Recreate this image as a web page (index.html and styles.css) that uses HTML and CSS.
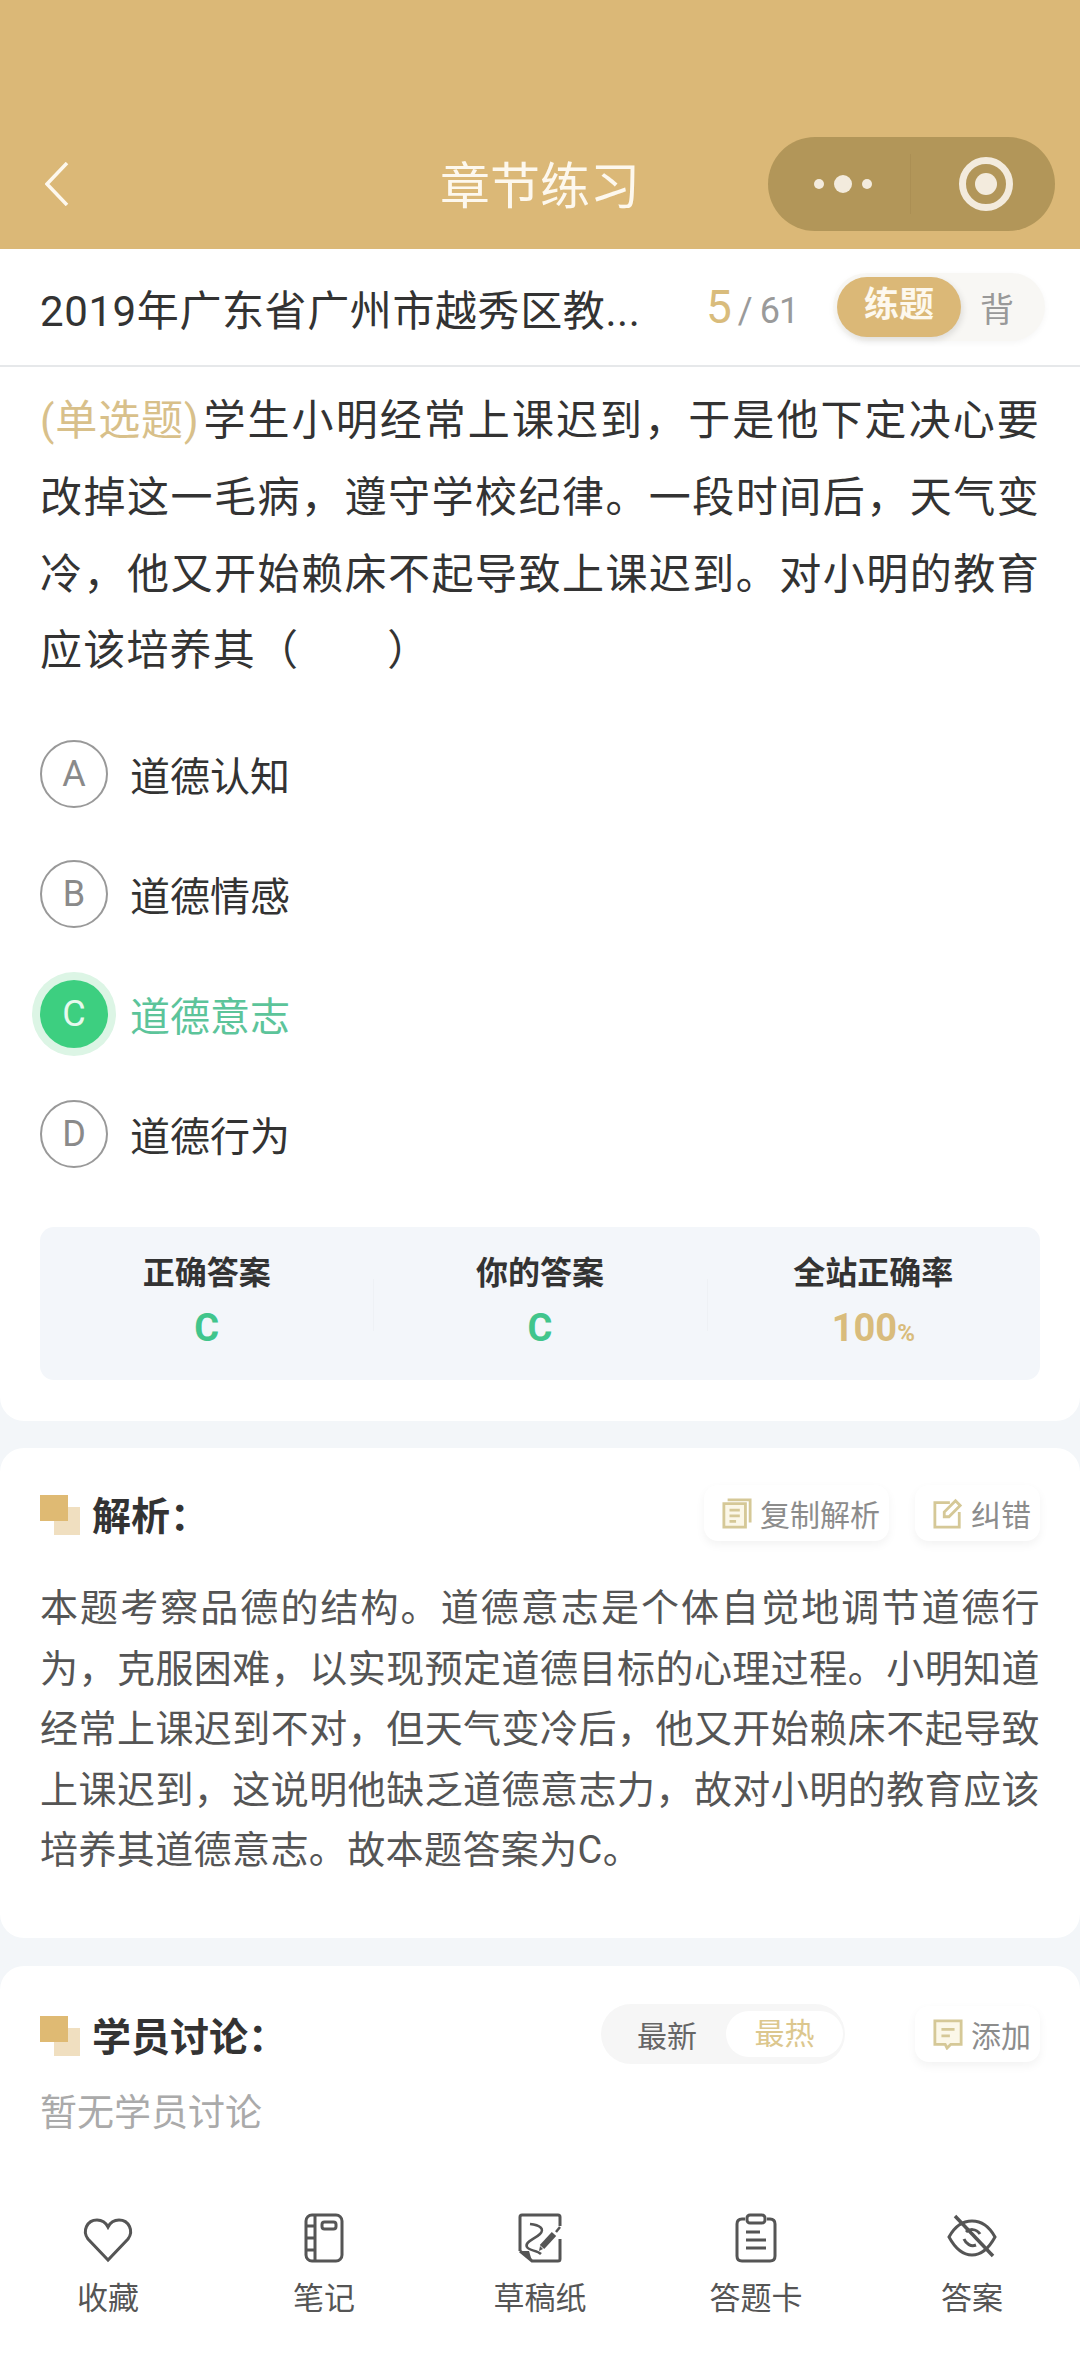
FILE: index.html
```html
<!DOCTYPE html>
<html lang="zh-CN">
<head>
  <meta charset="UTF-8">
  <title>章节练习</title>
  <meta name="viewport" content="width=device-width, initial-scale=1.0">
  <link rel="stylesheet" href="styles.css">
</head>
<body>
  <div class="page">
    <header class="nav">
      <svg class="nav-back" viewBox="0 0 24 44"><path d="M22 1 L2 22 L22 43" /></svg>
      <div class="nav-title">章节练习</div>
      <div class="capsule">
        <div class="capsule-more"><i></i><i class="big"></i><i></i></div>
        <div class="capsule-sep"></div>
        <div class="capsule-target"><i></i></div>
      </div>
    </header>

    <div class="subbar">
      <div class="subbar-title">2019年广东省广州市越秀区教...</div>
      <div class="count"><b>5</b><span>/ 61</span></div>
      <div class="mode">
        <span class="mode-on">练题</span>
        <span class="mode-off">背</span>
      </div>
    </div>

    <section class="card card-question">
      <p class="question"><span class="qtype">(单选题)</span>学生小明经常上课迟到，于是他下定决心要改掉这一毛病，遵守学校纪律。一段时间后，天气变冷，他又开始赖床不起导致上课迟到。对小明的教育应该培养其（&emsp;&emsp;）</p>
      <div class="options">
        <div class="option"><span class="letter">A</span>道德认知</div>
        <div class="option"><span class="letter">B</span>道德情感</div>
        <div class="option option-right"><span class="letter">C</span>道德意志</div>
        <div class="option"><span class="letter">D</span>道德行为</div>
      </div>
      <div class="stats">
        <div class="stat"><div class="stat-label">正确答案</div><div class="stat-value green">C</div></div>
        <div class="stat"><div class="stat-label">你的答案</div><div class="stat-value green">C</div></div>
        <div class="stat"><div class="stat-label">全站正确率</div><div class="stat-value gold">100<small>%</small></div></div>
      </div>
    </section>

    <section class="card card-analysis">
      <div class="card-head">
        <div class="mark"></div>
        <h2>解析：</h2>
        <div class="head-actions">
          <div class="chip">
            <svg viewBox="0 0 32 32"><path class="ic-fill" d="M2 6 H25 V31 H2 Z"/><path d="M2 6 H25 V31 H2 Z M8 13 H19 M8 19 H19 M8 25 H15 M6 2 H30 V26"/></svg>
            复制解析
          </div>
          <div class="chip">
            <svg viewBox="0 0 32 32"><path d="M18 5 H2 V31 H28 V15 M12 20 L12 15 L24 3 L29 8 L17 20 Z"/></svg>
            纠错
          </div>
        </div>
      </div>
      <p class="analysis">本题考察品德的结构。道德意志是个体自觉地调节道德行为，克服困难，以实现预定道德目标的心理过程。小明知道经常上课迟到不对，但天气变冷后，他又开始赖床不起导致上课迟到，这说明他缺乏道德意志力，故对小明的教育应该培养其道德意志。故本题答案为C。</p>
    </section>

    <section class="card card-discuss">
      <div class="card-head">
        <div class="mark"></div>
        <h2>学员讨论：</h2>
        <div class="head-actions">
          <div class="tabs">
            <span class="tab">最新</span>
            <span class="tab tab-on">最热</span>
          </div>
          <div class="chip chip-add">
            <svg viewBox="0 0 32 32"><path class="ic-fill" d="M2 2 H30 V27 H19 L15 31 L13 27 H2 Z"/><path d="M2 2 H30 V27 H19 L15 31 L13 27 H2 Z M9 11 H23 M9 18 H18"/></svg>
            添加
          </div>
        </div>
      </div>
      <div class="empty">暂无学员讨论</div>

      <nav class="tools">
        <div class="tool">
          <svg viewBox="0 0 50 50"><path d="M25 47 L5 26 C-1 18 4 7 14 7 C19 7 23 10 25 14 C27 10 31 7 36 7 C46 7 51 18 45 26 Z"/></svg>
          <span>收藏</span>
        </div>
        <div class="tool">
          <svg viewBox="0 0 50 50"><rect x="7" y="2" width="36" height="46" rx="6"/><path d="M16 2 V48 M7 13 H16 M7 25 H16 M7 37 H16"/><rect x="23" y="9" width="14" height="7" rx="2.5"/></svg>
          <span>笔记</span>
        </div>
        <div class="tool">
          <svg viewBox="0 0 50 50"><path d="M5 38 V4 Q5 2 7 2 H43 Q45 2 45 4 V13 M45 26 V46 Q45 48 43 48 H17 L5 38"/><path class="solid" d="M5 38 H14 L17 48 Z"/><path class="thin" d="M15 11 C25 12 30 16 25 21 C20 26 9 29 12 34 C14 38 22 37 26 41"/><path class="pencil" d="M27 34 L39 21"/><path class="solid" d="M24 38 L25 33 L28 36 Z"/><path class="thin" d="M41 19 L45 14"/></svg>
          <span>草稿纸</span>
        </div>
        <div class="tool">
          <svg viewBox="0 0 50 50"><path d="M14 6 H11 Q6 6 6 11 V43 Q6 48 11 48 H39 Q44 48 44 43 V11 Q44 6 39 6 H36"/><rect x="16" y="2" width="18" height="8" rx="3"/><path d="M15 19 H29 M15 27 H35 M15 35 H35"/></svg>
          <span>答题卡</span>
        </div>
        <div class="tool">
          <svg viewBox="0 0 50 50"><path d="M2 24 C8 13 16 8 25 8 C34 8 42 13 48 24 C42 35 34 42 25 42 C16 42 8 35 2 24 Z M19 19 C22 16 29 15 33 21 M17 26 C19 31 24 34 29 32"/><path class="strike" d="M8 3 L46 43"/></svg>
          <span>答案</span>
        </div>
      </nav>
    </section>
  </div>
</body>
</html>
```

FILE: styles.css
```css
* {
  box-sizing: border-box;
}
html, body {
  margin: 0;
  padding: 0;
}
body {
  font-family: Roboto, "Noto Sans CJK SC", sans-serif;
  color: #333;
  background: #f3f6f9;
}
.page {
  width: 1080px;
  height: 2376px;
  display: flex;
  flex-direction: column;
  overflow: hidden;
}
h2, p {
  margin: 0;
}

/* top bar */
.nav {
  height: 249px;
  flex: none;
  background: #dbb877;
  display: flex;
  align-items: center;
  position: relative;
  padding: 137px 25px 18px 45px;
}
.nav-back {
  width: 24px;
  height: 44px;
  fill: none;
  stroke: #fdf8ee;
  stroke-width: 3.5;
}
.nav-title {
  position: absolute;
  left: 0;
  right: 0;
  top: 159px;
  text-align: center;
  font-size: 50px;
  line-height: 56px;
  color: #fdf8ee;
}
.capsule {
  margin-left: auto;
  width: 287px;
  height: 94px;
  border-radius: 47px;
  background: #b29659;
  display: flex;
  align-items: center;
}
.capsule-more {
  width: 142px;
  display: flex;
  align-items: center;
  justify-content: center;
  gap: 10px;
  padding-left: 8px;
}
.capsule-more i {
  width: 10px;
  height: 10px;
  border-radius: 50%;
  background: #f3ebdd;
}
.capsule-more i.big {
  width: 18px;
  height: 18px;
}
.capsule-sep {
  width: 1px;
  height: 60px;
  background: #ab8f54;
}
.capsule-target {
  width: 54px;
  height: 54px;
  margin-left: 48px;
  border: 7px solid #f3ebdd;
  border-radius: 50%;
  display: flex;
  align-items: center;
  justify-content: center;
}
.capsule-target i {
  width: 22px;
  height: 22px;
  border-radius: 50%;
  background: #f3ebdd;
}

/* title row */
.subbar {
  height: 118px;
  flex: none;
  background: #fff;
  border-bottom: 2px solid #e6e8ea;
  display: flex;
  align-items: center;
  padding: 0 33px 0 40px;
}
.subbar-title {
  font-size: 42px;
  letter-spacing: 0.6px;
  color: #333;
  width: 666px;
  white-space: nowrap;
}
.count {
  font-size: 36px;
  color: #9a9a9a;
  display: flex;
  align-items: baseline;
  gap: 6px;
  width: 127px;
}
.count b {
  font-weight: 400;
  font-size: 46px;
  color: #d9bc7c;
}
.count span {
  letter-spacing: -1px;
}
.mode {
  width: 212px;
  height: 68px;
  border-radius: 34px;
  background: #f8f7f4;
  display: flex;
  align-items: center;
  padding-left: 4px;
  box-shadow: 0 2px 6px rgba(0, 0, 0, 0.04);
}
.mode-on {
  width: 124px;
  height: 60px;
  line-height: 58px;
  border-radius: 30px;
  background: #dbb877;
  color: #fdf8ee;
  font-size: 35px;
  font-weight: 700;
  text-align: center;
  box-shadow: 2px 3px 6px rgba(0, 0, 0, 0.1);
}
.mode-off {
  margin-left: 19px;
  font-size: 34px;
  color: #999;
}

/* cards */
.card {
  background: #fff;
  padding: 0 40px;
  flex: none;
}
.card-question {
  height: 1054px;
  padding-top: 16px;
  border-radius: 0 0 24px 24px;
}
.question {
  font-size: 42px;
  letter-spacing: 1.2px;
  line-height: 76.8px;
  text-align: justify;
  color: #333;
}
.qtype {
  color: #d8c08a;
  letter-spacing: 0;
  margin-right: 4px;
}
.options {
  margin-top: 50px;
  display: flex;
  flex-direction: column;
  gap: 52px;
}
.option {
  height: 68px;
  display: flex;
  align-items: center;
  gap: 22px;
  font-size: 40px;
  color: #333;
}
.letter {
  width: 68px;
  height: 68px;
  border: 2.5px solid #999;
  border-radius: 50%;
  display: flex;
  align-items: center;
  justify-content: center;
  font-size: 36px;
  color: #8a8a8a;
}
.option-right {
  color: #5cc49a;
}
.option-right .letter {
  border: none;
  background: #3dcf80;
  color: #e6f9ee;
  box-shadow: 0 0 0 8px #dcf5e5;
}
.stats {
  margin-top: 59px;
  height: 153px;
  border-radius: 14px;
  background: #f3f6fa;
  display: flex;
}
.stat {
  flex: 1;
  text-align: center;
  padding-top: 26px;
  position: relative;
}
.stat + .stat::before {
  content: "";
  position: absolute;
  left: 0;
  top: 52px;
  height: 52px;
  width: 1px;
  background: #eef1f5;
}
.stat-label {
  font-size: 32px;
  font-weight: 700;
  line-height: 40px;
  color: #333;
}
.stat-value {
  font-size: 38px;
  font-weight: 700;
  line-height: 46px;
  margin-top: 12px;
}
.stat-value small {
  font-size: 24px;
}
.green {
  color: #41c58c;
}
.gold {
  color: #d9bc7c;
}
.card-analysis {
  margin-top: 27px;
  height: 490px;
  border-radius: 24px;
  padding-top: 37px;
}
.card-discuss {
  margin-top: 28px;
  flex: 1;
  border-radius: 24px 24px 0 0;
  padding-top: 40px;
  display: flex;
  flex-direction: column;
}
.card-head {
  display: flex;
  align-items: center;
  height: 60px;
}
.mark {
  width: 40px;
  height: 40px;
  flex: none;
  background:
    linear-gradient(#dfba73, #dfba73) 0 0 / 28px 26px no-repeat,
    linear-gradient(#f0dfc0, #f0dfc0) 14px 12px / 26px 28px no-repeat;
}
.card-head h2 {
  margin: 4px 0 0 12px;
  font-size: 39px;
  line-height: 60px;
  font-weight: 700;
  color: #333;
}
.head-actions {
  margin-left: auto;
  margin-bottom: 5px;
  display: flex;
  align-items: center;
}
.chip {
  display: flex;
  align-items: center;
  gap: 8px;
  height: 56px;
  padding: 0 9px 0 18px;
  margin-left: 26px;
  border-radius: 14px;
  background: #fff;
  font-size: 30px;
  color: #8c8c8c;
  box-shadow: 0 4px 10px rgba(0, 0, 0, 0.05);
}
.chip svg {
  width: 30px;
  height: 32px;
  fill: none;
  stroke: #d5c897;
  stroke-width: 3;
}
.chip .ic-fill {
  fill: #fbf7e8;
  stroke: none;
}
.chip-add {
  margin-left: 70px;
}
.analysis {
  margin-top: 33px;
  font-size: 38px;
  letter-spacing: 0.4px;
  line-height: 60.5px;
  text-align: justify;
  color: #555;
}
.tabs {
  width: 244px;
  height: 60px;
  border-radius: 30px;
  background: #f6f6f6;
  display: flex;
  align-items: center;
  padding-left: 36px;
}
.tab {
  font-size: 30px;
  color: #666;
}
.tab-on {
  margin-left: 29px;
  width: 117px;
  height: 46px;
  line-height: 46px;
  border-radius: 23px;
  background: #fff;
  color: #dcc78e;
  text-align: center;
}
.empty {
  margin-top: 23px;
  font-size: 37px;
  line-height: 50px;
  color: #aaa;
}

/* bottom tools */
.tools {
  display: grid;
  grid-template-columns: repeat(5, 216px);
  margin: 74px -40px 0;
}
.tool {
  display: flex;
  flex-direction: column;
  align-items: center;
  gap: 18px;
  font-size: 31px;
  line-height: 36px;
  color: #555;
}
.tool svg {
  width: 50px;
  height: 50px;
  fill: none;
  stroke: #555;
  stroke-width: 3;
  overflow: visible;
}
.tool .solid {
  fill: #555;
  stroke: none;
}
.tool .thin {
  stroke-width: 2.5;
}
.tool .pencil {
  stroke-width: 6;
}
.tool .strike {
  stroke: #555;
  stroke-width: 3.5;
}
```
